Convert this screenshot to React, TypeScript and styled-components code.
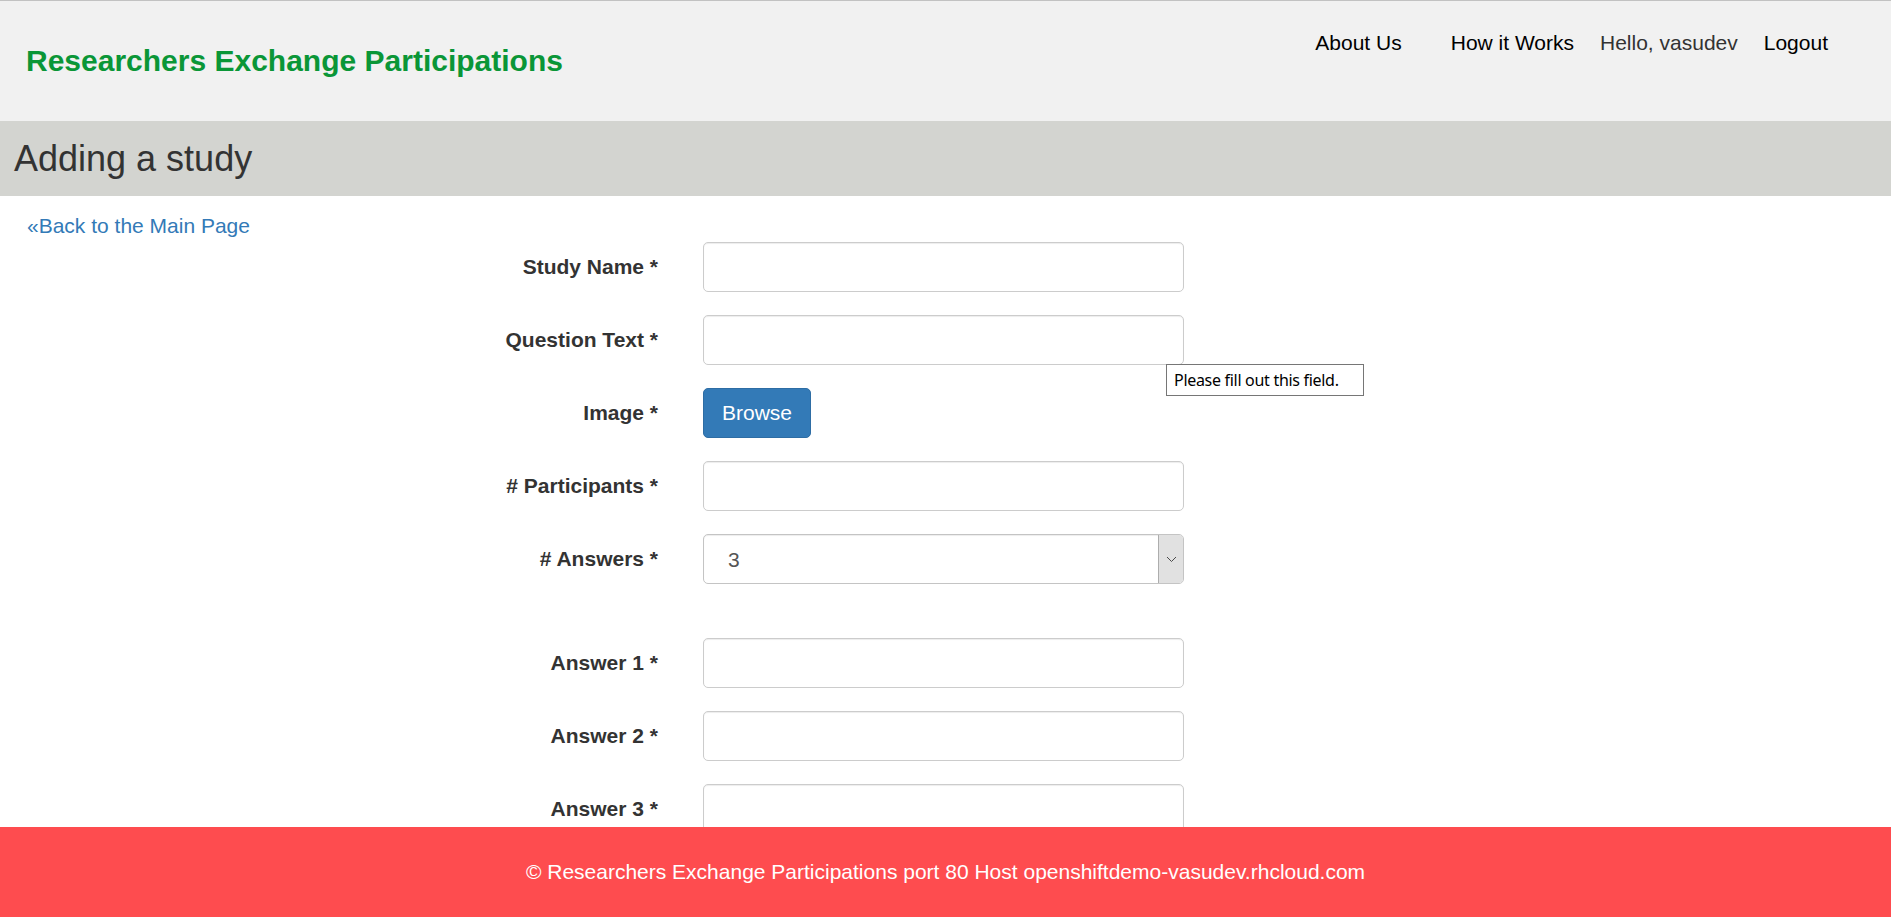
import styled, { createGlobalStyle } from "styled-components";

const GlobalStyle = createGlobalStyle`
  html, body {
    margin: 0;
    padding: 0;
    background: #fff;
    font-family: "Liberation Sans", Arial, Helvetica, sans-serif;
    color: #333;
  }
  * {
    box-sizing: border-box;
  }
`;

const fields = [
  { label: "Study Name *", kind: "text" },
  { label: "Question Text *", kind: "text", tooltip: "Please fill out this field." },
  { label: "Image *", kind: "file" },
  { label: "# Participants *", kind: "text" },
  { label: "# Answers *", kind: "select" },
];

const answers = ["Answer 1 *", "Answer 2 *", "Answer 3 *"];

function Chevron() {
  return (
    <svg width="11" height="7" viewBox="0 0 11 7">
      <polyline points="1,1 5.5,5.5 10,1" fill="none" stroke="#4a4a4a" strokeWidth="1" />
    </svg>
  );
}

function App() {
  return (
    <Page>
      <GlobalStyle />
      <Header>
        <Brand>Researchers Exchange Participations</Brand>
        <Nav>
          <NavLink href="#" $spaced>
            About Us
          </NavLink>
          <NavLink href="#">How it Works</NavLink>
          <Greeting>Hello, vasudev</Greeting>
          <NavLink href="#">Logout</NavLink>
        </Nav>
      </Header>

      <TitleBand>Adding a study</TitleBand>

      <BackRow>
        <BackLink href="#">«Back to the Main Page</BackLink>
      </BackRow>

      <Form>
        {fields.map((f) => (
          <Row key={f.label}>
            <Label>{f.label}</Label>
            <Control>
              {f.kind === "text" && <Input type="text" />}
              {f.kind === "file" && <BrowseButton type="button">Browse</BrowseButton>}
              {f.kind === "select" && (
                <SelectBox>
                  <Select defaultValue="3">
                    <option>1</option>
                    <option>2</option>
                    <option>3</option>
                    <option>4</option>
                    <option>5</option>
                  </Select>
                  <ArrowCell>
                    <Chevron />
                  </ArrowCell>
                </SelectBox>
              )}
              {f.tooltip && <Tooltip>{f.tooltip}</Tooltip>}
            </Control>
          </Row>
        ))}

        <AnswerGroup>
          {answers.map((a) => (
            <Row key={a}>
              <Label>{a}</Label>
              <Control>
                <Input type="text" />
              </Control>
            </Row>
          ))}
        </AnswerGroup>
      </Form>

      <Footer>© Researchers Exchange Participations port 80 Host openshiftdemo-vasudev.rhcloud.com</Footer>
    </Page>
  );
}

const Page = styled.div`
  padding-bottom: 90px;
`;

const Header = styled.header`
  display: flex;
  justify-content: space-between;
  align-items: flex-start;
  height: 121px;
  border-top: 1px solid #c2c2c2;
  background-color: #f1f1f1;
  padding: 0 63px 0 26px;
`;

const Brand = styled.div`
  height: 120px;
  line-height: 120px;
  font-size: 30px;
  font-weight: bold;
  color: #0a9637;
`;

const Nav = styled.nav`
  display: flex;
  align-items: center;
  gap: 26px;
  padding-top: 27px;
  font-size: 21px;
  line-height: 30px;
`;

const NavLink = styled.a<{ $spaced?: boolean }>`
  color: #000;
  text-decoration: none;
  margin-right: ${(p) => (p.$spaced ? "23px" : "0")};
`;

const Greeting = styled.span`
  color: #333;
`;

const TitleBand = styled.h1`
  margin: 0;
  height: 75px;
  line-height: 75px;
  padding-left: 14px;
  background-color: #d3d4d0;
  font-size: 36px;
  font-weight: normal;
  color: #333;
`;

const BackRow = styled.div`
  padding: 16px 0 0 27px;
  line-height: 28px;
`;

const BackLink = styled.a`
  font-size: 21px;
  color: #337ab7;
  text-decoration: none;
`;

const Form = styled.form`
  display: flex;
  flex-direction: column;
  padding-left: 458px;
`;

const AnswerGroup = styled.div`
  display: flex;
  flex-direction: column;
  margin-top: 31px;
`;

const Row = styled.div`
  display: grid;
  grid-template-columns: 200px 481px;
  column-gap: 45px;
  align-items: center;
  height: 50px;
  margin-bottom: 23px;
`;

const Label = styled.label`
  text-align: right;
  font-size: 21px;
  font-weight: bold;
  color: #333;
`;

const Control = styled.div`
  position: relative;
  height: 50px;
`;

const Input = styled.input`
  display: block;
  width: 100%;
  height: 50px;
  padding: 0 16px;
  font: inherit;
  font-size: 21px;
  color: #555;
  background: #fff;
  border: 1px solid #ccc;
  border-radius: 5px;
  box-shadow: inset 0 1px 1px rgba(0, 0, 0, 0.075);
  outline: none;
`;

const BrowseButton = styled.button`
  height: 50px;
  padding: 0 18px;
  font-family: inherit;
  font-size: 21px;
  color: #fff;
  background-color: #337ab7;
  border: 1px solid #2e6da4;
  border-radius: 5px;
  cursor: pointer;
`;

const SelectBox = styled.div`
  display: flex;
  height: 50px;
  border: 1px solid #c4c4c4;
  border-radius: 5px;
  overflow: hidden;
  background: #fff;
  box-shadow: inset 0 1px 1px rgba(0, 0, 0, 0.075);
`;

const Select = styled.select`
  flex: 1;
  appearance: none;
  border: none;
  background: transparent;
  padding: 0 0 0 24px;
  font-family: inherit;
  font-size: 21px;
  color: #555;
  outline: none;
`;

const ArrowCell = styled.span`
  display: flex;
  align-items: center;
  justify-content: center;
  width: 25px;
  background-color: #e1e1e1;
  border-left: 1px solid #adadad;
`;

const Tooltip = styled.div`
  position: absolute;
  left: calc(100% - 18px);
  top: calc(100% - 1px);
  z-index: 5;
  width: 198px;
  height: 32px;
  padding: 0 7px;
  line-height: 30px;
  white-space: nowrap;
  font-family: "Noto Sans", "Open Sans", sans-serif;
  font-size: 16px;
  letter-spacing: -0.3px;
  color: #000;
  background: #fff;
  border: 1px solid #767676;
`;

const Footer = styled.footer`
  position: fixed;
  left: 0;
  right: 0;
  bottom: 0;
  height: 90px;
  line-height: 90px;
  text-align: center;
  font-size: 21px;
  color: #fff;
  background-color: #fe4c4f;
`;

export default App;
